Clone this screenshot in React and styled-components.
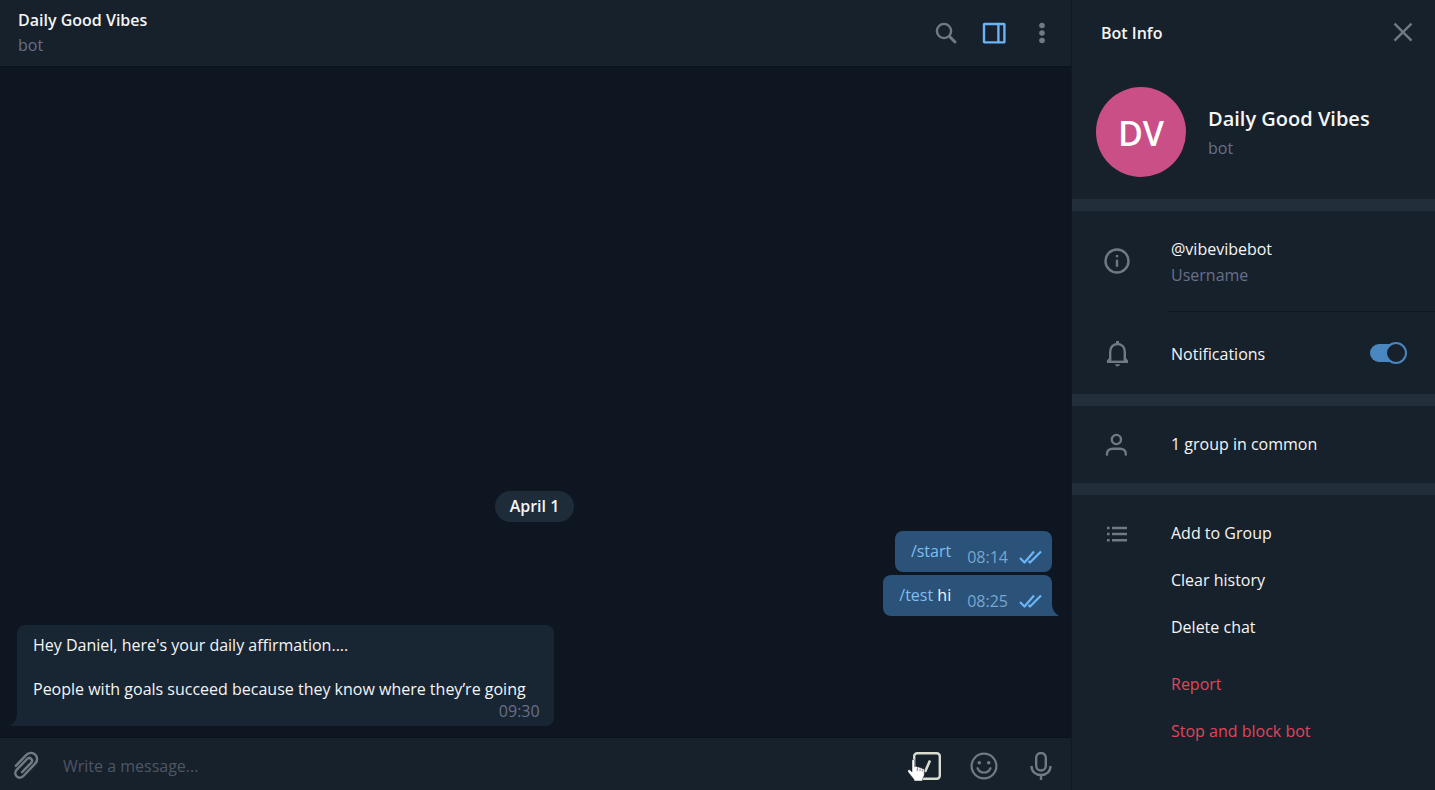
import React, { useState } from "react";
import styled, { createGlobalStyle, css } from "styled-components";

const GlobalStyle = createGlobalStyle`
  *, *::before, *::after { box-sizing: border-box; }
  body {
    margin: 0;
    background: #0e1621;
    color: #f5f5f5;
    font-family: "Open Sans", "Noto Sans", sans-serif;
    font-size: 16px;
    line-height: 22px;
  }
  h1, h2, h3, p, ul { margin: 0; padding: 0; }
  ul { list-style: none; }
  svg { display: block; }
`;

const Layout = styled.div`
  display: grid;
  grid-template-columns: minmax(0, 1fr) 364px;
  min-height: 100vh;
`;

const Chat = styled.main`
  display: flex;
  flex-direction: column;
`;

const ChatHeader = styled.header`
  display: flex;
  align-items: center;
  justify-content: space-between;
  height: 67px;
  padding: 0 17px 0 18px;
  background: #17212b;
  border-bottom: 1px solid #0a121a;
`;

const ChatTitle = styled.h1`
  font-size: 16px;
  font-weight: 600;
  line-height: 25px;
`;

const Muted = styled.p`
  color: #686f8a;
  line-height: 25px;
`;

const HeaderTools = styled.div`
  display: flex;
  gap: 24px;
`;

const IconButton = styled.button`
  position: relative;
  display: flex;
  align-items: center;
  justify-content: center;
  width: ${(props) => props.$size || 24}px;
  height: ${(props) => props.$size || 24}px;
  padding: 0;
  border: 0;
  background: none;
  color: ${(props) => props.$color || "#717981"};
  cursor: pointer;
`;

const History = styled.section`
  flex: 1;
  display: flex;
  flex-direction: column;
  justify-content: flex-end;
  padding: 16px 19px 11px 17px;
`;

const DateBadge = styled.h2`
  align-self: center;
  margin-bottom: 9px;
  padding: 4px 15px 5px;
  border-radius: 16px;
  background: #1e2c3a;
  font-size: 16px;
  font-weight: 600;
`;

const Messages = styled.ul`
  display: flex;
  flex-direction: column;
  gap: 3px;
`;

const Bubble = styled.li`
  position: relative;
  border-radius: 8px;
  ${(props) =>
    props.$out
      ? css`
          display: flex;
          gap: 16px;
          align-self: flex-end;
          padding: 9px 10px 10px 16px;
          background: #2b5278;
        `
      : css`
          align-self: flex-start;
          margin-top: 6px;
          padding: 9px 14px 4px 16px;
          background: #182533;
        `}
  ${(props) =>
    props.$last &&
    (props.$out ? "border-bottom-right-radius: 0;" : "border-bottom-left-radius: 0;")}
`;

const Tail = styled.svg`
  position: absolute;
  bottom: 0;
  ${(props) => (props.$out ? "left: 100%;" : "right: 100%; transform: scaleX(-1);")}
`;

const MessageText = styled.p`
  padding-right: ${(props) => (props.$wide ? 14 : 0)}px;
  white-space: pre-line;
`;

const Command = styled.a`
  color: #7fbdf0;
  text-decoration: none;
`;

const Stamp = styled.div`
  display: flex;
  align-items: center;
  justify-content: flex-end;
  gap: 11px;
  color: ${(props) => (props.$out ? "#77a7d3" : "#686f8a")};
  ${(props) => props.$out && "padding-top: 6px; margin-bottom: -6px;"}
`;

const Composer = styled.form`
  display: flex;
  align-items: center;
  height: 53px;
  padding: 4px 16px 0 12px;
  border-top: 1px solid #0a121a;
  background: #17212b;
`;

const MessageInput = styled.input`
  flex: 1;
  min-width: 0;
  margin: 0 23px;
  padding: 0 0 1px;
  border: 0;
  outline: 0;
  background: none;
  color: #f5f5f5;
  font: inherit;
  &::placeholder { color: #4e5566; opacity: 1; }
`;

const ComposerTools = styled.div`
  display: flex;
  gap: 29px;
`;

const Pointer = styled.svg`
  position: absolute;
  top: 7px;
  left: -6px;
`;

const Side = styled.aside`
  background: #17212b;
  border-left: 1px solid #0f1922;
`;

const SideHeader = styled.header`
  display: flex;
  align-items: center;
  justify-content: space-between;
  height: 66px;
  padding: 0 20px 0 29px;
`;

const SideTitle = styled.h2`
  font-size: 16px;
  font-weight: 600;
`;

const Profile = styled.div`
  display: flex;
  align-items: center;
  gap: 22px;
  padding: 21px 24px 22px;
`;

const Avatar = styled.div`
  display: flex;
  align-items: center;
  justify-content: center;
  width: 90px;
  height: 90px;
  padding-top: 2px;
  border-radius: 50%;
  background: #c94f86;
  color: #fff;
  font-size: 34px;
  font-weight: 600;
`;

const ProfileName = styled.h3`
  padding-bottom: 2px;
  font-size: 20px;
  font-weight: 600;
  line-height: 30px;
`;

const Section = styled.section`
  border-top: 12px solid #232e3b;
  padding: ${(props) => props.$pad || "0"};
`;

const Row = styled.div`
  display: grid;
  grid-template-columns: 26px minmax(0, 1fr) auto;
  column-gap: 41px;
  align-items: center;
  height: ${(props) => props.$height}px;
  padding: 0 28px 0 32px;
`;

const RowIcon = styled.span`
  display: flex;
  align-items: center;
  justify-content: center;
  height: 28px;
  color: #717981;
`;

const RowLabel = styled.label`
  padding-top: 2px;
`;

const Field = styled.div`
  padding-top: 2px;
  line-height: 26px;
  ${Muted} { line-height: 26px; }
`;

const Divider = styled.hr`
  height: 1px;
  margin: 0 0 0 96px;
  border: 0;
  background: #101921;
`;

const Switch = styled.input`
  appearance: none;
  display: flex;
  align-items: center;
  width: 37px;
  height: 22px;
  margin: 0;
  cursor: pointer;
  &::before {
    content: "";
    flex: none;
    width: 30px;
    height: 18px;
    border-radius: 9px;
    background: ${(props) => (props.checked ? "#4a86c0" : "#6f7780")};
  }
  &::after {
    content: "";
    flex: none;
    width: 22px;
    height: 22px;
    margin-left: ${(props) => (props.checked ? -15 : -30)}px;
    border: 2px solid ${(props) => (props.checked ? "#4a86c0" : "#6f7780")};
    border-radius: 50%;
    background: #17212b;
  }
`;

const PlainButton = styled.button`
  width: 100%;
  height: 47px;
  padding: 0 0 2px;
  border: 0;
  background: none;
  color: ${(props) => (props.$danger ? "#e0455a" : "#f5f5f5")};
  font: inherit;
  text-align: left;
  cursor: pointer;
`;

const Actions = styled.div`
  display: grid;
  grid-template-columns: 26px minmax(0, 1fr);
  column-gap: 41px;
  padding: 0 28px 0 32px;
`;

const ActionIcon = styled(RowIcon)`
  height: 48px;
`;

const ActionList = styled.ul`
  & + & {
    grid-column: 2;
    margin-top: 10px;
  }
`;

const stroke = {
  fill: "none",
  stroke: "currentColor",
  strokeWidth: 2.4,
  strokeLinecap: "round",
  strokeLinejoin: "round",
};

const SearchIcon = () => (
  <svg width="24" height="24" viewBox="0 0 24 24" {...stroke}>
    <circle cx="10" cy="10" r="7.1" />
    <path d="M15.3 15.3 21 21" strokeWidth="3" />
  </svg>
);

const PanelIcon = () => (
  <svg width="24" height="24" viewBox="0 0 24 24" {...stroke}>
    <rect x="2" y="3" width="20.4" height="18.4" rx="0.5" />
    <path d="M16.4 3v18" />
  </svg>
);

const DotsIcon = () => (
  <svg width="24" height="24" viewBox="0 0 24 24" fill="currentColor">
    <circle cx="12" cy="4.5" r="2.8" />
    <circle cx="12" cy="12" r="2.8" />
    <circle cx="12" cy="19.5" r="2.8" />
  </svg>
);

const CloseIcon = () => (
  <svg width="24" height="24" viewBox="0 0 24 24" {...stroke} strokeLinecap="butt">
    <path d="m3.5 2.7 17 17M20.5 2.7l-17 17" />
  </svg>
);

const InfoIcon = () => (
  <svg width="26" height="26" viewBox="0 0 26 26" {...stroke}>
    <circle cx="13" cy="13" r="11.5" />
    <path d="M13 11.8v7M13 7v2.3" strokeLinecap="butt" />
  </svg>
);

const BellIcon = () => (
  <svg width="26" height="28" viewBox="0 0 26 28" {...stroke} strokeLinecap="butt">
    <path d="M3 22.8h21" />
    <path d="M6.2 22.5v-9.500c0-5 3-8 7.300-8s7.300 3 7.300 8v9.500" />
    <path d="M3.500 22.800 6.200 19.500M23.500 22.800 20.800 19.500" />
    <path d="M13.500 2v3.500" strokeWidth="3" />
    <path d="M11 25.300h5c-.5 1.500-1.400 2.200-2.500 2.200s-2-.7-2.500-2.200z" fill="currentColor" stroke="none" />
  </svg>
);

const PersonIcon = () => (
  <svg width="26" height="26" viewBox="0 0 26 26" {...stroke}>
    <circle cx="12.4" cy="7.500" r="4.600" />
    <path d="M3 22.500v-.8c0-3.100 2.600-5 5.700-5h7.400c3.100 0 5.700 1.900 5.700 5v.8" />
  </svg>
);

const ListIcon = () => (
  <svg width="26" height="26" viewBox="0 0 26 26" {...stroke} strokeLinecap="butt">
    <path d="M3 7h2.600M8 7h15M3 13h2.600M8 13h15M3 19.200h2.600M8 19.200h15" />
  </svg>
);

const ClipIcon = () => (
  <svg width="28" height="30" viewBox="0 0 28 30" {...stroke} strokeWidth="2.500">
    <path d="M3.800 14.800 14.100 4.200c2.600-2.700 6.500-3 9.100-.5 2.600 2.400 2.400 6.400-.1 9L11.400 25c-1.900 2-4.800 2.200-6.700.4-1.900-1.900-1.800-4.800.1-6.800L15.100 8c1.200-1.200 2.900-1.300 4.100-.2 1.100 1.100 1 2.800-.1 4l-9 9.300" />
  </svg>
);

const SlashIcon = () => (
  <svg width="28" height="28" viewBox="0 0 28 28" {...stroke}>
    <rect x="1.200" y="1.200" width="25.600" height="25.600" rx="3" />
    <path d="M17 8.500 12 20" strokeWidth="2.600" strokeLinecap="butt" />
  </svg>
);

const SmileIcon = () => (
  <svg width="28" height="28" viewBox="0 0 28 28" {...stroke} strokeWidth="2.200">
    <circle cx="14" cy="14" r="12.400" />
    <path d="M7.500 16.200c1.200 2.800 3.600 4.300 6.500 4.300s5.300-1.500 6.500-4.300" />
    <circle cx="9.300" cy="10.700" r="1.800" fill="currentColor" stroke="none" />
    <circle cx="18.700" cy="10.700" r="1.800" fill="currentColor" stroke="none" />
  </svg>
);

const MicIcon = () => (
  <svg width="28" height="28" viewBox="0 0 28 28" {...stroke} strokeLinecap="butt">
    <rect x="9.200" y="1" width="9.600" height="17.500" rx="4.800" />
    <path d="M4.500 14c0 5.500 4 9 9.500 9s9.500-3.500 9.500-9" />
    <path d="M14 23v5" />
  </svg>
);

const TicksIcon = () => (
  <svg width="23" height="14" viewBox="0 0 23 14" {...stroke} stroke="#6cb5f5" strokeWidth="2.200" strokeLinecap="butt">
    <path d="m1 8 4.500 4.500L15 1.500M9.500 11l1.500 1.500L22 1.500" />
  </svg>
);

const HandPointer = () => (
  <Pointer width="18" height="23" viewBox="0 0 18 23" aria-hidden="true">
    <path
      d="M5 1.600C5 .8 5.600.5 6.300.5S7.700.9 7.700 1.700v6.100c.5-.7 2.300-.6 2.700.5.700-.6 2.200-.4 2.600.7.800-.5 2.100-.1 2.300.900.9-.3 2 .2 2 1.300v4.300c0 1.700-1.500 3.500-1.800 4.700V22H7v-1.500C5.700 18.500 3.200 16 1.400 13.500c-.7-1-.8-2-.1-2.500s1.700-.2 2.400.5L5 13z"
      fill="#fff"
      stroke="#17212b"
      strokeWidth="0.500"
    />
    <path d="M10.300 9v3M13 9.800V12M15.300 11v1.500" fill="none" stroke="#58616a" strokeWidth="0.800" />
  </Pointer>
);

const BubbleTail = ({ out }) => (
  <Tail $out={out} width="7" height="12" viewBox="0 0 7 12" aria-hidden="true">
    <path d="M0 0c0 5 2.500 9 7 12H0z" fill={out ? "#2b5278" : "#182533"} />
  </Tail>
);

const messages = [
  { id: 1, out: true, command: "/start", time: "08:14" },
  { id: 2, out: true, command: "/test", text: " hi", time: "08:25", last: true },
  {
    id: 3,
    text: "Hey Daniel, here's your daily affirmation....\n\nPeople with goals succeed because they know where they’re going",
    time: "09:30",
    last: true,
  },
];

const Message = ({ message }) => {
  const { out, command, text, time, last } = message;
  return (
    <Bubble $out={out} $last={last}>
      <MessageText $wide={!out}>
        {command && <Command href={`#${command}`}>{command}</Command>}
        {text}
      </MessageText>
      <Stamp $out={out}>
        <time>{time}</time>
        {out && <TicksIcon />}
      </Stamp>
      {last && <BubbleTail out={out} />}
    </Bubble>
  );
};

function ChatPane() {
  const [draft, setDraft] = useState("");
  return (
    <Chat>
      <ChatHeader>
        <div>
          <ChatTitle>Daily Good Vibes</ChatTitle>
          <Muted>bot</Muted>
        </div>
        <HeaderTools>
          <IconButton aria-label="Search"><SearchIcon /></IconButton>
          <IconButton aria-label="Toggle info panel" $color="#6ab3f8"><PanelIcon /></IconButton>
          <IconButton aria-label="More"><DotsIcon /></IconButton>
        </HeaderTools>
      </ChatHeader>
      <History>
        <DateBadge>April 1</DateBadge>
        <Messages>
          {messages.map((message) => (
            <Message key={message.id} message={message} />
          ))}
        </Messages>
      </History>
      <Composer onSubmit={(e) => e.preventDefault()}>
        <IconButton type="button" aria-label="Attach" $size={28}><ClipIcon /></IconButton>
        <MessageInput
          aria-label="Message"
          placeholder="Write a message..."
          value={draft}
          onChange={(e) => setDraft(e.target.value)}
        />
        <ComposerTools>
          <IconButton type="button" aria-label="Commands" $size={28} $color="#d9dccf">
            <SlashIcon />
            <HandPointer />
          </IconButton>
          <IconButton type="button" aria-label="Emoji" $size={28}><SmileIcon /></IconButton>
          <IconButton type="button" aria-label="Voice message" $size={28}><MicIcon /></IconButton>
        </ComposerTools>
      </Composer>
    </Chat>
  );
}

function InfoPane() {
  const [notify, setNotify] = useState(true);
  return (
    <Side>
      <SideHeader>
        <SideTitle>Bot Info</SideTitle>
        <IconButton aria-label="Close"><CloseIcon /></IconButton>
      </SideHeader>
      <Profile>
        <Avatar>DV</Avatar>
        <div>
          <ProfileName>Daily Good Vibes</ProfileName>
          <Muted>bot</Muted>
        </div>
      </Profile>
      <Section>
        <Row $height={100}>
          <RowIcon><InfoIcon /></RowIcon>
          <Field>
            <p>@vibevibebot</p>
            <Muted>Username</Muted>
          </Field>
        </Row>
        <Divider />
        <Row $height={82}>
          <RowIcon><BellIcon /></RowIcon>
          <RowLabel htmlFor="notifications">Notifications</RowLabel>
          <Switch
            id="notifications"
            type="checkbox"
            checked={notify}
            onChange={(e) => setNotify(e.target.checked)}
          />
        </Row>
      </Section>
      <Section>
        <Row $height={77}>
          <RowIcon><PersonIcon /></RowIcon>
          <PlainButton>1 group in common</PlainButton>
        </Row>
      </Section>
      <Section $pad="15px 0 0">
        <Actions>
          <ActionIcon><ListIcon /></ActionIcon>
          <ActionList>
            <li><PlainButton>Add to Group</PlainButton></li>
            <li><PlainButton>Clear history</PlainButton></li>
            <li><PlainButton>Delete chat</PlainButton></li>
          </ActionList>
          <ActionList>
            <li><PlainButton $danger>Report</PlainButton></li>
            <li><PlainButton $danger>Stop and block bot</PlainButton></li>
          </ActionList>
        </Actions>
      </Section>
    </Side>
  );
}

export default function App() {
  return (
    <>
      <GlobalStyle />
      <Layout>
        <ChatPane />
        <InfoPane />
      </Layout>
    </>
  );
}
